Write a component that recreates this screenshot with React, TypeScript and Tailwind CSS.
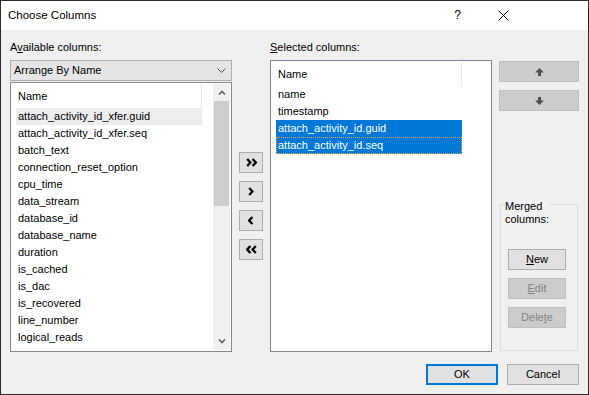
import type { ReactNode } from 'react'

// Windows-style "Choose Columns" dialog

const AVAILABLE = [
  'attach_activity_id_xfer.guid',
  'attach_activity_id_xfer.seq',
  'batch_text',
  'connection_reset_option',
  'cpu_time',
  'data_stream',
  'database_id',
  'database_name',
  'duration',
  'is_cached',
  'is_dac',
  'is_recovered',
  'line_number',
  'logical_reads',
]

const SELECTED = ['name', 'timestamp', 'attach_activity_id.guid', 'attach_activity_id.seq']

function Chevrons({ dir, double }: { dir: 'left' | 'right'; double?: boolean }) {
  const one = dir === 'right' ? 'M1.2 1 L4.4 4.5 L1.2 8' : 'M4.4 1 L1.2 4.5 L4.4 8'
  const two = dir === 'right' ? 'M6.6 1 L9.8 4.5 L6.6 8' : 'M9.8 1 L6.6 4.5 L9.8 8'
  return (
    <svg width={double ? 11 : 6} height="9" viewBox={double ? '0 0 11 9' : '0 0 6 9'} fill="none">
      <path d={one} stroke="#000" strokeWidth="2.3" />
      {double && <path d={two} stroke="#000" strokeWidth="2.3" />}
    </svg>
  )
}

function MoveButton({ children }: { children: ReactNode }) {
  return (
    <div className="w-[24px] h-[21px] bg-[#e1e1e1] border border-[#adadad] flex items-center justify-center">
      {children}
    </div>
  )
}

function Arrow({ down }: { down?: boolean }) {
  return (
    <svg width="9" height="8" viewBox="0 0 9 8" className={down ? 'rotate-180' : ''}>
      <path d="M4.5 0 L9 4.5 H6 V8 H3 V4.5 H0 Z" fill="#4f4f4f" />
    </svg>
  )
}

function Btn({ children, disabled, w = 'w-[58px]' }: { children: ReactNode; disabled?: boolean; w?: string }) {
  return (
    <div
      className={
        disabled
          ? `${w} h-[21px] bg-[#cccccc] border border-[#bfbfbf] text-[#838383] flex items-center justify-center`
          : `${w} h-[21px] bg-[#e1e1e1] border border-[#adadad] flex items-center justify-center`
      }
    >
      {children}
    </div>
  )
}

function ScrollArrow({ down }: { down?: boolean }) {
  return (
    <div className="h-[17px] flex items-center justify-center">
      <svg width="8" height="5" viewBox="0 0 8 5" fill="none" className={down ? 'rotate-180' : ''}>
        <path d="M1 4.5 L4 1.5 L7 4.5" stroke="#606060" strokeWidth="1.6" />
      </svg>
    </div>
  )
}

function Header() {
  return (
    <div className="h-[24px] w-[190px] flex items-center border-r border-[#e5e5e5] pl-[6px]">Name</div>
  )
}

export default function App() {
  return (
    <div className="w-[589px] h-[395px] border border-[#2b2b2b] bg-[#f0f0f0] flex flex-col font-['Liberation_Sans',sans-serif] text-[11px] text-black leading-[13px] overflow-hidden">
      {/* title bar */}
      <div className="h-[29px] bg-white flex items-center pl-[7px] shrink-0">
        <span className="text-[11.5px]">Choose Columns</span>
        <span className="ml-auto mr-[37px] text-[12px]">?</span>
        <svg width="11" height="11" viewBox="0 0 11 11" className="mr-[79px]">
          <path d="M0.5 0.5 L10.5 10.5 M10.5 0.5 L0.5 10.5" stroke="#000" strokeWidth="1" />
        </svg>
      </div>

      <div className="flex items-start pl-[9px] pt-[10px]">
        {/* available columns */}
        <div className="w-[222px]">
          <div className="h-[14px] leading-[14px] mb-[6px]">
            A<span className="underline">v</span>ailable columns:
          </div>
          <div className="h-[21px] bg-[#e5e5e5] border border-[#adadad] flex items-center pl-[3px] pr-[5px]">
            <span>Arrange By Name</span>
            <svg width="9" height="5" viewBox="0 0 9 5" fill="none" className="ml-auto">
              <path d="M0.5 0.5 L4.5 4.5 L8.5 0.5" stroke="#555" strokeWidth="1" />
            </svg>
          </div>
          <div className="mt-[1px] h-[270px] bg-white border border-[#828790] p-[1px] flex">
            <div className="flex-1">
              <Header />
              {AVAILABLE.map((c, i) => (
                <div
                  key={c}
                  className={`ml-[4px] w-[186px] h-[17px] pl-[2px] flex items-center ${i === 0 ? 'bg-[#ededed]' : ''}`}
                >
                  {c}
                </div>
              ))}
            </div>
            <div className="w-[17px] bg-[#f0f0f0] flex flex-col">
              <ScrollArrow />
              <div className="flex-1 px-[1px]">
                <div className="h-[105px] bg-[#cdcdcd]" />
              </div>
              <ScrollArrow down />
            </div>
          </div>
        </div>

        {/* move buttons */}
        <div className="ml-[7px] mt-[112px] flex flex-col gap-[8px]">
          <MoveButton>
            <Chevrons dir="right" double />
          </MoveButton>
          <MoveButton>
            <Chevrons dir="right" />
          </MoveButton>
          <MoveButton>
            <Chevrons dir="left" />
          </MoveButton>
          <MoveButton>
            <Chevrons dir="left" double />
          </MoveButton>
        </div>

        {/* selected columns */}
        <div className="ml-[7px] w-[222px]">
          <div className="h-[14px] leading-[14px] mb-[6px]">
            <span className="underline">S</span>elected columns:
          </div>
          <div className="h-[292px] bg-white border border-[#828790] p-[1px]">
            <Header />
            {SELECTED.map((c, i) => (
              <div
                key={c}
                className={`ml-[4px] w-[186px] h-[17px] pl-[2px] flex items-center ${
                  i >= 2 ? 'bg-[#0078d7] text-white' : ''
                } ${i === 3 ? 'outline-1 outline-dotted outline-[#f7a44a] -outline-offset-1' : ''}`}
              >
                {c}
              </div>
            ))}
          </div>
        </div>

        {/* order + merged */}
        <div className="ml-[7px] w-[80px] flex flex-col">
          <div className="mt-[21px] h-[21px] bg-[#cccccc] border border-[#bfbfbf] flex items-center justify-center">
            <Arrow />
          </div>
          <div className="mt-[8px] h-[21px] bg-[#cccccc] border border-[#bfbfbf] flex items-center justify-center">
            <Arrow down />
          </div>
          <div className="relative mt-[93px] ml-[1px] w-[78px] h-[147px] border border-[#dcdcdc] pl-[7px] pt-[44px] flex flex-col gap-[8px]">
            <div className="absolute -top-[5px] left-[3px] bg-[#f0f0f0] px-[1px] leading-[13px]">
              Merged
              <br />
              columns:
            </div>
            <Btn>
              <span className="underline">N</span>ew
            </Btn>
            <Btn disabled>
              <span className="underline">E</span>dit
            </Btn>
            <Btn disabled>
              Dele<span className="underline">t</span>e
            </Btn>
          </div>
        </div>
      </div>

      {/* footer */}
      <div className="mt-[12px] flex justify-end gap-[9px] pr-[9px]">
        <div className="w-[72px] h-[21px] bg-[#e1e1e1] border-2 border-[#0078d7] flex items-center justify-center">OK</div>
        <div className="w-[72px] h-[21px] bg-[#e1e1e1] border border-[#adadad] flex items-center justify-center">Cancel</div>
      </div>
    </div>
  )
}
